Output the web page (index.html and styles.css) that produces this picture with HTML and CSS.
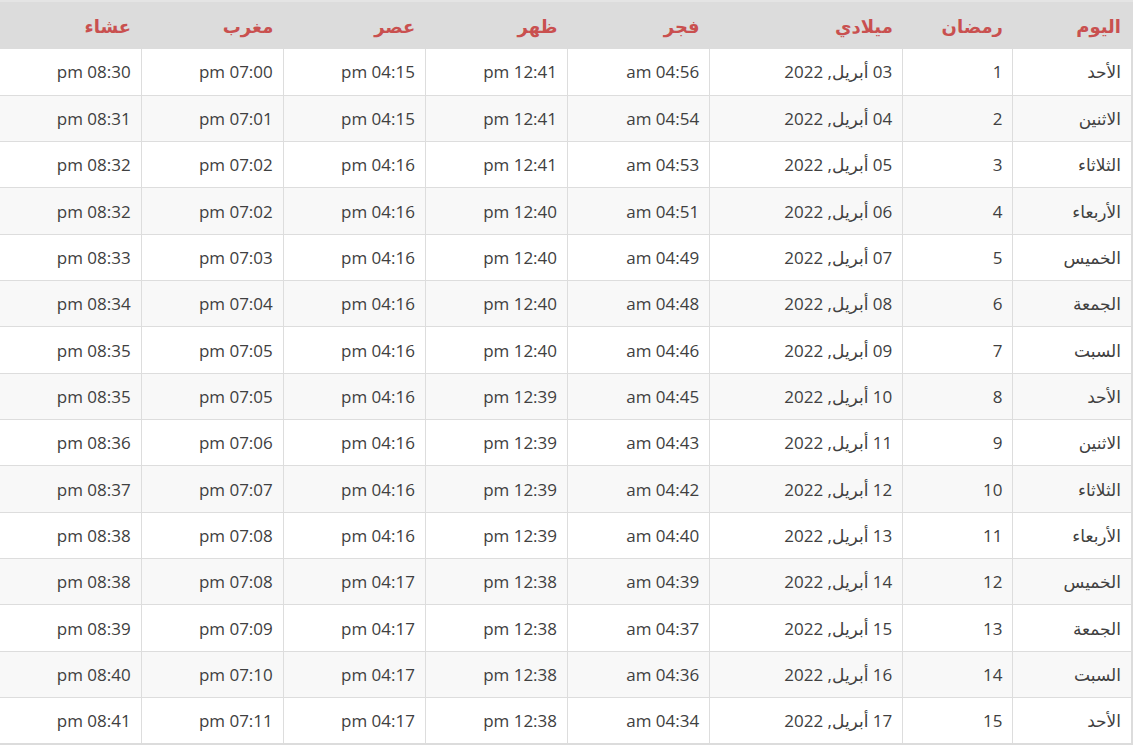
FILE: index.html
```html
<!DOCTYPE html>
<html lang="ar" dir="rtl">
<head>
<meta charset="utf-8">
<title>إمساكية رمضان</title>
<link rel="stylesheet" href="styles.css">
</head>
<body>
<div class="wrap">
<table class="times">
<thead>
<tr>
<th class="c-day">اليوم</th>
<th class="c-ram">رمضان</th>
<th class="c-date">ميلادي</th>
<th class="c-t">فجر</th>
<th class="c-t">ظهر</th>
<th class="c-t">عصر</th>
<th class="c-t">مغرب</th>
<th class="c-last">عشاء</th>
</tr>
</thead>
<tbody>
<tr><td>الأحد</td><td>1</td><td>03 أبريل, 2022</td><td>am 04:56</td><td>pm 12:41</td><td>pm 04:15</td><td>pm 07:00</td><td>pm 08:30</td></tr>
<tr><td>الاثنين</td><td>2</td><td>04 أبريل, 2022</td><td>am 04:54</td><td>pm 12:41</td><td>pm 04:15</td><td>pm 07:01</td><td>pm 08:31</td></tr>
<tr><td>الثلاثاء</td><td>3</td><td>05 أبريل, 2022</td><td>am 04:53</td><td>pm 12:41</td><td>pm 04:16</td><td>pm 07:02</td><td>pm 08:32</td></tr>
<tr><td>الأربعاء</td><td>4</td><td>06 أبريل, 2022</td><td>am 04:51</td><td>pm 12:40</td><td>pm 04:16</td><td>pm 07:02</td><td>pm 08:32</td></tr>
<tr><td>الخميس</td><td>5</td><td>07 أبريل, 2022</td><td>am 04:49</td><td>pm 12:40</td><td>pm 04:16</td><td>pm 07:03</td><td>pm 08:33</td></tr>
<tr><td>الجمعة</td><td>6</td><td>08 أبريل, 2022</td><td>am 04:48</td><td>pm 12:40</td><td>pm 04:16</td><td>pm 07:04</td><td>pm 08:34</td></tr>
<tr><td>السبت</td><td>7</td><td>09 أبريل, 2022</td><td>am 04:46</td><td>pm 12:40</td><td>pm 04:16</td><td>pm 07:05</td><td>pm 08:35</td></tr>
<tr><td>الأحد</td><td>8</td><td>10 أبريل, 2022</td><td>am 04:45</td><td>pm 12:39</td><td>pm 04:16</td><td>pm 07:05</td><td>pm 08:35</td></tr>
<tr><td>الاثنين</td><td>9</td><td>11 أبريل, 2022</td><td>am 04:43</td><td>pm 12:39</td><td>pm 04:16</td><td>pm 07:06</td><td>pm 08:36</td></tr>
<tr><td>الثلاثاء</td><td>10</td><td>12 أبريل, 2022</td><td>am 04:42</td><td>pm 12:39</td><td>pm 04:16</td><td>pm 07:07</td><td>pm 08:37</td></tr>
<tr><td>الأربعاء</td><td>11</td><td>13 أبريل, 2022</td><td>am 04:40</td><td>pm 12:39</td><td>pm 04:16</td><td>pm 07:08</td><td>pm 08:38</td></tr>
<tr><td>الخميس</td><td>12</td><td>14 أبريل, 2022</td><td>am 04:39</td><td>pm 12:38</td><td>pm 04:17</td><td>pm 07:08</td><td>pm 08:38</td></tr>
<tr><td>الجمعة</td><td>13</td><td>15 أبريل, 2022</td><td>am 04:37</td><td>pm 12:38</td><td>pm 04:17</td><td>pm 07:09</td><td>pm 08:39</td></tr>
<tr><td>السبت</td><td>14</td><td>16 أبريل, 2022</td><td>am 04:36</td><td>pm 12:38</td><td>pm 04:17</td><td>pm 07:10</td><td>pm 08:40</td></tr>
<tr><td>الأحد</td><td>15</td><td>17 أبريل, 2022</td><td>am 04:34</td><td>pm 12:38</td><td>pm 04:17</td><td>pm 07:11</td><td>pm 08:41</td></tr>
</tbody>
</table>
</div>
</body>
</html>
```

FILE: styles.css
```css
html, body {
  margin: 0;
  padding: 0;
  background: #ffffff;
}

.wrap {
  width: 1133px;
  margin-left: 0;
  margin-right: auto;
}

.times {
  width: 1133px;
  margin-left: 0;
  margin-right: auto;
  table-layout: fixed;
  border-collapse: collapse;
  direction: rtl;
  font-family: "Open Sans", "DejaVu Sans", sans-serif;
  font-size: 17px;
  color: #404040;
  border-right: 2px solid #dcdcdc;
  border-bottom: 2px solid #dcdcdc;
}

.times th,
.times td {
  box-sizing: border-box;
}

.times thead tr {
  background: #dcdcdc;
  height: 48px;
}

.times th {
  text-align: right;
  font-weight: 700;
  font-size: 18px;
  color: #c9504f;
  padding: 0 10px;
  vertical-align: middle;
  border-top: 2px solid #e4e4e4;
}

.c-day { width: 119px; }
.c-ram { width: 110px; }
.c-date { width: 193px; }
.c-t { width: 142px; }
.c-last { width: 141px; }

.times tbody tr {
  height: 46.33px;
}

.times tbody tr:nth-child(even) {
  background: #f8f8f8;
}

.times td {
  text-align: right;
  padding: 0 10px;
  vertical-align: middle;
  border: 1px solid #dddddd;
  white-space: nowrap;
}

.times tbody tr:first-child td {
  border-top: none;
}

.times td:last-child {
  border-left: none;
}
```
